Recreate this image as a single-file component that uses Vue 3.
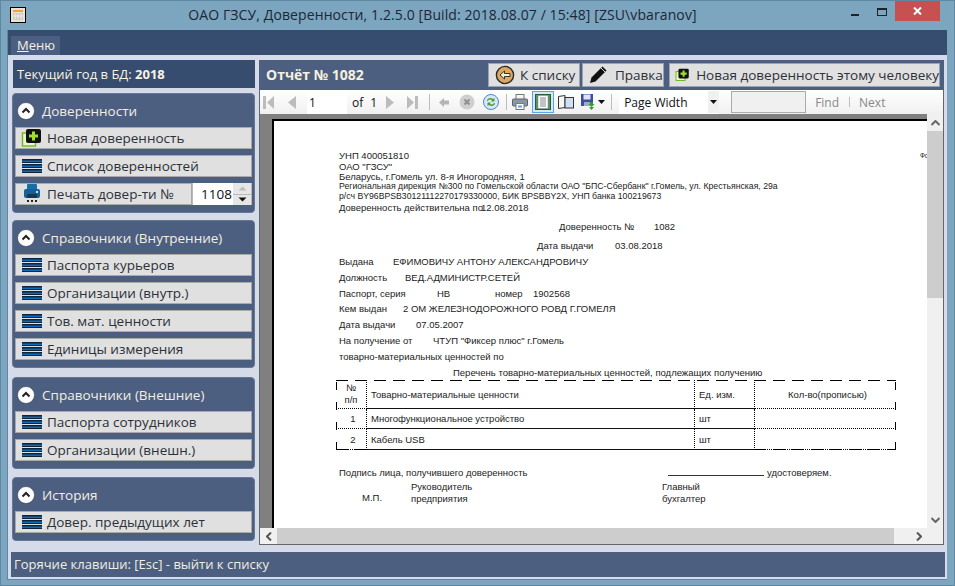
<template>
  <div class="window">
    <!-- title bar -->
    <div class="titlebar">
      <svg class="app_icon" width="17" height="17" viewBox="0 0 17 17">
        <rect x="0.5" y="0.5" width="15" height="15" fill="#e8e4da" stroke="#000" />
        <rect x="3" y="3" width="10" height="2" fill="#f0a040" />
        <rect x="3" y="6" width="10" height="7" fill="#cfc8b8" />
        <path d="M5 6.5v6M8 6.5v6M11 6.5v6M3 9h10" stroke="#eee" />
      </svg>
      <div class="title">ОАО ГЗСУ, Доверенности, 1.2.5.0 [Build: 2018.08.07 / 15:48] [ZSU\vbaranov]</div>
      <div class="min_btn"></div>
      <div class="max_btn"></div>
      <div class="close_btn">
        <svg width="9" height="8" viewBox="0 0 9 8"><path d="M1 0.5l7 7M8 0.5l-7 7" stroke="#fff" stroke-width="2" /></svg>
      </div>
    </div>

    <div class="client">
      <div class="menubar"><span class="menu_item"><u>М</u>еню</span></div>

      <div class="body">
        <!-- left column -->
        <div class="left">
          <div class="year_bar">Текущий год в БД: <b>2018</b></div>

          <div v-for="g in groups" :key="g.title" class="group" :class="g.cls">
            <div class="group_head">
              <svg width="18" height="18" viewBox="0 0 18 18">
                <circle cx="9" cy="9" r="8.5" fill="#fff" stroke="#2a3a55" stroke-width="0.6" />
                <path d="M5.5 10.5L9 7l3.5 3.5" fill="none" stroke="#222" stroke-width="2" />
              </svg>
              <span>{{ g.title }}</span>
            </div>
            <div class="group_items">
              <template v-for="b in g.items" :key="b.text">
                <div v-if="b.spin" class="side_btn spin_row">
                  <div class="spin_main">
                    <svg class="ic" width="22" height="20" viewBox="0 0 22 20">
                      <rect x="6" y="0" width="10" height="6" rx="1" fill="#1a6ea8" />
                      <rect x="3" y="5" width="16" height="9" rx="2" fill="#12619a" />
                      <rect x="6" y="10" width="10" height="4" fill="#0c3a5c" />
                      <rect x="15" y="7" width="2" height="2" fill="#cfe4f4" />
                      <path d="M6 17h2M10 17h2M14 17h2" stroke="#222" stroke-width="2" />
                    </svg>
                    <span>{{ b.text }}</span>
                  </div>
                  <div class="spin_val">1108</div>
                  <div class="spin_btns">
                    <div class="spin_up"><svg width="9" height="5" viewBox="0 0 9 5"><path d="M0.5 4.5L4.5 0.5l4 4z" fill="#bbb" /></svg></div>
                    <div class="spin_down"><svg width="9" height="5" viewBox="0 0 9 5"><path d="M0.5 0.5L4.5 4.5l4-4z" fill="#111" /></svg></div>
                  </div>
                </div>
                <div v-else class="side_btn">
                  <svg v-if="b.plus" class="ic" width="22" height="20" viewBox="0 0 22 20">
                    <rect x="1.5" y="5" width="13" height="13" fill="#eaf5d0" stroke="#6db81e" stroke-width="1.4" />
                    <rect x="5" y="1" width="15" height="14" rx="2" fill="#111" />
                    <path d="M12.5 3.5v9M8 8h9" stroke="#9ee02a" stroke-width="3" />
                  </svg>
                  <svg v-else class="ic" width="22" height="16" viewBox="0 0 22 16">
                    <g v-for="y in [1, 6, 11]" :key="y">
                      <rect x="1" :y="y" width="20" height="4" fill="#10233a" />
                      <rect x="1" :y="y + 1.5" width="20" height="1.5" fill="#0f6cb8" />
                    </g>
                  </svg>
                  <span>{{ b.text }}</span>
                </div>
              </template>
            </div>
          </div>
        </div>

        <!-- right column -->
        <div class="right">
          <div class="report_head">
            <div class="report_title">Отчёт № 1082</div>
            <div class="head_btn back_btn">
              <svg width="20" height="20" viewBox="0 0 20 20">
                <circle cx="10" cy="10" r="8.6" fill="#dba85f" stroke="#2b2b2b" stroke-width="1.4" />
                <path d="M5 10l4.5-4v2.5H15v3H9.500V14z" fill="#f4f0e0" stroke="#222" stroke-width="0.9" />
              </svg>
              <span>К списку</span>
            </div>
            <div class="head_btn edit_btn">
              <svg width="22" height="22" viewBox="0 0 22 22">
                <path d="M3 19l1.500-5.500L15.500 2.500l4 4L8.500 17.500z" fill="#111" />
                <path d="M14 4l4 4" stroke="#e0e0e0" stroke-width="1" />
              </svg>
              <span>Правка</span>
            </div>
            <div class="head_btn new_btn">
              <svg width="22" height="20" viewBox="0 0 22 20">
                <rect x="1.5" y="5" width="13" height="13" fill="#eaf5d0" stroke="#6db81e" stroke-width="1.4" />
                <rect x="5" y="1" width="15" height="14" rx="2" fill="#111" />
                <path d="M12.5 3.500v9M8 8h9" stroke="#9ee02a" stroke-width="3" />
              </svg>
              <span>Новая доверенность этому человеку</span>
            </div>
          </div>

          <div class="viewer">
            <div class="toolbar">
              <svg class="t_first" width="11" height="13" viewBox="0 0 11 13"><path d="M0 0h3v13H0zM11 0v13L4 6.500z" fill="#bcbcbc" /></svg>
              <svg class="t_prev" width="8" height="13" viewBox="0 0 8 13"><path d="M8 0v13L0 6.500z" fill="#bcbcbc" /></svg>
              <div class="page_input">1</div>
              <span class="t_of">of</span>
              <span class="t_total">1</span>
              <svg class="t_next" width="8" height="13" viewBox="0 0 8 13"><path d="M0 0v13l8-6.500z" fill="#bcbcbc" /></svg>
              <svg class="t_last" width="11" height="13" viewBox="0 0 11 13"><path d="M8 0h3v13H8zM0 0v13l7-6.500z" fill="#bcbcbc" /></svg>
              <div class="t_sep t_sep1"></div>
              <svg class="t_back" width="10" height="9" viewBox="0 0 10 9"><path d="M0 4.500L5 0v2.500h5v4H5V9z" fill="#b4b4b4" /></svg>
              <svg class="t_stop" width="16" height="16" viewBox="0 0 16 16">
                <circle cx="8" cy="8" r="7.500" fill="#cfcfcf" />
                <path d="M5.500 5.500l5 5M10.500 5.500l-5 5" stroke="#8f8f8f" stroke-width="2" />
              </svg>
              <svg class="t_refresh" width="16" height="16" viewBox="0 0 16 16">
                <circle cx="8" cy="8" r="7.500" fill="#d8e8f8" stroke="#4a86c8" />
                <path d="M4 7c0-3 4-4 6-2l1.500-1v3.500H8l1-1C8 5 5.500 5.500 5 7z" fill="#4aa02c" />
                <path d="M12 9c0 3-4 4-6 2l-1.500 1V8.500H8l-1 1c1 1.500 3.500 1 4-.5z" fill="#4aa02c" />
              </svg>
              <div class="t_sep t_sep2"></div>
              <svg class="t_print" width="16" height="16" viewBox="0 0 16 16">
                <rect x="4" y="0.500" width="8" height="5" fill="#f4f4f4" stroke="#777" />
                <rect x="0.500" y="5" width="15" height="7" rx="1" fill="#8b97a5" stroke="#5a6470" />
                <rect x="4" y="9.500" width="8" height="6" fill="#fff" stroke="#777" />
                <rect x="6" y="11.500" width="4" height="2" fill="#5aa0dc" />
              </svg>
              <div class="t_active">
                <svg width="16" height="16" viewBox="0 0 16 16">
                  <rect x="0.500" y="0.500" width="15" height="15" fill="#5f9168" stroke="#2c5a38" />
                  <rect x="3" y="1.500" width="10" height="13" fill="#fff" stroke="#6f8f78" stroke-width="0.5" />
                  <path d="M5 4h6M5 6h6M5 8h6M5 10h6M5 12h6" stroke="#667" stroke-width="0.8" />
                </svg>
              </div>
              <svg class="t_book" width="16" height="14" viewBox="0 0 16 14">
                <path d="M0.500 1.500L7 0.500v12l-6.500 1z" fill="#f6f6f6" stroke="#333" />
                <rect x="7" y="2.500" width="8.500" height="10.500" fill="#cfe0f2" stroke="#333" />
              </svg>
              <svg class="t_save" width="14" height="16" viewBox="0 0 14 16">
                <rect x="0" y="0" width="12" height="12" fill="#3c4ca8" />
                <rect x="2.500" y="0.500" width="7" height="5" fill="#dfe3f4" />
                <rect x="3" y="8" width="6" height="4" fill="#a0a8d0" />
                <path d="M7.500 10l3 3 3-3-1.500 0-.500-2h-2l-.500 2zM8 13h5l-2.500 3z" fill="#2fa030" />
              </svg>
              <svg class="t_caret" width="7" height="4" viewBox="0 0 7 4"><path d="M0 0h7L3.500 4z" fill="#111" /></svg>
              <div class="t_sep t_sep3"></div>
              <div class="zoom_select">
                <span>Page Width</span>
                <div class="zoom_arrow"><svg width="7" height="4" viewBox="0 0 7 4"><path d="M0 0h7L3.500 4z" fill="#111" /></svg></div>
              </div>
              <div class="find_box"></div>
              <span class="t_find">Find</span>
              <div class="t_sep t_sep4"></div>
              <span class="t_nextword">Next</span>
            </div>

            <div class="report_area">
              <div class="report_scroll">
                <div class="page">
                  <div
                    v-for="(l, i) in lines"
                    :key="i"
                    class="ln"
                    :style="{ height: l.h + 'px', paddingLeft: l.x + 'px' }"
                  >
                    <span
                      v-for="(p, j) in l.parts"
                      :key="j"
                      :style="p.w ? { width: p.w + 'px' } : {}"
                      :class="p.cls"
                    >{{ p.t }}</span>
                  </div>

                  <div class="doc_table">
                    <div class="cell c1 head two"><span>№</span><span>п/п</span></div>
                    <div class="cell c2 head">Товарно-материальные ценности</div>
                    <div class="cell c3 head">Ед. изм.</div>
                    <div class="cell c4 head center">Кол-во(прописью)</div>

                    <template v-for="r in rows" :key="r.n">
                      <div class="cell c1 row center">{{ r.n }}</div>
                      <div class="cell c2 row">{{ r.name }}</div>
                      <div class="cell c3 row">шт</div>
                      <div class="cell c4 row"></div>
                    </template>
                  </div>

                  <div class="sign_row">
                    <span class="sign_label">Подпись лица, получившего доверенность</span>
                    <span class="sign_line"></span>
                    <span>удостоверяем.</span>
                  </div>
                  <div class="boss_row">
                    <span class="mp">М.П.</span>
                    <span class="boss">Руководитель<br />предприятия</span>
                    <span>Главный<br />бухгалтер</span>
                  </div>
                </div>
                <div class="v_scroll">
                  <div class="arrow_box"><svg width="9" height="6" viewBox="0 0 9 6"><path d="M0.500 5L4.500 1l4 4" fill="none" stroke="#666" stroke-width="2" /></svg></div>
                  <div class="v_thumb"></div>
                  <div class="v_rest"></div>
                  <div class="arrow_box"><svg width="9" height="6" viewBox="0 0 9 6"><path d="M0.500 1L4.500 5l4-4" fill="none" stroke="#666" stroke-width="2" /></svg></div>
                </div>
              </div>
              <div class="h_scroll">
                <div class="h_arrow"><svg width="6" height="9" viewBox="0 0 6 9"><path d="M5 0.500L1 4.500l4 4" fill="none" stroke="#555" stroke-width="2" /></svg></div>
                <div class="h_thumb"></div>
                <div class="h_rest"><svg width="6" height="9" viewBox="0 0 6 9"><path d="M1 0.500L5 4.500l-4 4" fill="none" stroke="#555" stroke-width="2" /></svg></div>
              </div>
            </div>
          </div>
        </div>
      </div>

      <div class="statusbar">Горячие клавиши: [Esc] - выйти к списку</div>
    </div>
  </div>
</template>

<script setup>
const groups = [
  {
    title: 'Доверенности',
    cls: 'g1',
    items: [
      { text: 'Новая доверенность', plus: true },
      { text: 'Список доверенностей' },
      { text: 'Печать довер-ти №', spin: true },
    ],
  },
  {
    title: 'Справочники (Внутренние)',
    cls: 'g2',
    items: [
      { text: 'Паспорта курьеров' },
      { text: 'Организации (внутр.)' },
      { text: 'Тов. мат. ценности' },
      { text: 'Единицы измерения' },
    ],
  },
  {
    title: 'Справочники (Внешние)',
    cls: 'g3',
    items: [{ text: 'Паспорта сотрудников' }, { text: 'Организации (внешн.)' }],
  },
  {
    title: 'История',
    cls: 'g4',
    items: [{ text: 'Довер. предыдущих лет' }],
  },
]

// h = line height in the printed form, x = left indent inside the page
const lines = [
  { h: 40, x: 65, parts: [{ t: 'УНП 400051810', cls: 'bottom' }, { t: 'Форма №М-2', cls: 'form_no' }] },
  { h: 10, x: 65, parts: [{ t: 'ОАО "ГЗСУ"' }] },
  { h: 10, x: 65, parts: [{ t: 'Беларусь, г.Гомель ул. 8-я Иногородняя, 1' }] },
  { h: 10, x: 65, parts: [{ t: 'Региональная дирекция №300 по Гомельской области ОАО "БПС-Сбербанк" г.Гомель, ул. Крестьянская, 29а', cls: 'small' }] },
  { h: 10, x: 65, parts: [{ t: 'р/сч BY96BPSB30121112270179330000, БИК BPSBBY2X, УНП банка 100219673', cls: 'small' }] },
  { h: 13, x: 65, parts: [{ t: 'Доверенность действительна по', w: 142 }, { t: '12.08.2018' }] },
  { h: 24, x: 285, parts: [{ t: 'Доверенность №', w: 95 }, { t: '1082' }], },
  { h: 15, x: 263, parts: [{ t: 'Дата выдачи', w: 78 }, { t: '03.08.2018' }] },
  { h: 16, x: 65, parts: [{ t: 'Выдана', w: 54 }, { t: 'ЕФИМОВИЧУ АНТОНУ АЛЕКСАНДРОВИЧУ' }] },
  { h: 16, x: 65, parts: [{ t: 'Должность', w: 66 }, { t: 'ВЕД.АДМИНИСТР.СЕТЕЙ' }] },
  { h: 16, x: 65, parts: [{ t: 'Паспорт, серия', w: 98 }, { t: 'НВ', w: 58 }, { t: 'номер', w: 38 }, { t: '1902568' }] },
  { h: 15, x: 65, parts: [{ t: 'Кем выдан', w: 64 }, { t: '2 ОМ ЖЕЛЕЗНОДОРОЖНОГО РОВД Г.ГОМЕЛЯ' }] },
  { h: 16, x: 65, parts: [{ t: 'Дата выдачи', w: 77 }, { t: '07.05.2007' }] },
  { h: 16, x: 65, parts: [{ t: 'На получение от', w: 94 }, { t: 'ЧТУП "Фиксер плюс" г.Гомель' }] },
  { h: 17, x: 65, parts: [{ t: 'товарно-материальных ценностей по' }] },
  { h: 14, x: 179, parts: [{ t: 'Перечень товарно-материальных ценностей, подлежащих получению' }] },
]

const rows = [
  { n: 1, name: 'Многофункциональное устройство' },
  { n: 2, name: 'Кабель USB' },
]
</script>

<style scoped>
.window {
  width: 955px;
  height: 586px;
  box-sizing: border-box;
  background: #7ca5c0;
  border: 1px solid #5f87a3;
  display: flex;
  flex-direction: column;
  font-family: "Open Sans", "Noto Sans", sans-serif;
  overflow: hidden;
}

/* title bar */
.titlebar {
  height: 29px;
  display: flex;
  align-items: flex-start;
  flex-shrink: 0;
}

.app_icon {
  margin: 6px 0 0 9px;
  flex-shrink: 0;
}

.title {
  width: 824px;
  text-align: center;
  font-size: 14px;
  line-height: 28px;
  color: #1c2733;
  white-space: nowrap;
  padding-left: 7px;
  box-sizing: border-box;
  letter-spacing: 0.1px;
}

.min_btn {
  width: 8px;
  height: 2px;
  background: #222;
  margin: 13px 0 0 0;
}

.max_btn {
  width: 8px;
  height: 5px;
  border: 1px solid #222;
  border-top-width: 2px;
  margin: 7px 0 0 18px;
}

.close_btn {
  width: 45px;
  height: 20px;
  background: #c75050;
  margin-left: 8px;
  display: flex;
  align-items: center;
  justify-content: center;
}

/* client area */
.client {
  margin: 0 7px 0 6px;
  height: 549px;
  background: #d5dbe9;
  border-left: 1px solid #5f87a3;
  border-bottom: 1px solid #5f87a3;
  display: flex;
  flex-direction: column;
}

.menubar {
  height: 25px;
  background: #364d70;
  padding: 3px 0 0 3px;
  box-sizing: border-box;
  flex-shrink: 0;
}

.menu_item {
  display: inline-block;
  height: 19px;
  line-height: 19px;
  padding: 0 5px 0 6px;
  background: #4d5f80;
  color: #f4f1e6;
  font-size: 13px;
}

.body {
  height: 491px;
  display: flex;
  padding-top: 5px;
  box-sizing: border-box;
}

/* left column */
.left {
  width: 243px;
  margin-left: 4px;
  display: flex;
  flex-direction: column;
  flex-shrink: 0;
}

.year_bar {
  height: 28px;
  line-height: 28px;
  margin-left: 1px;
  background: #364d70;
  color: #f8f3e4;
  font-size: 13px;
  padding-left: 4px;
  margin-bottom: 5px;
}

.group {
  background: #4d5f80;
  border: 1px solid #66779a;
  border-radius: 4px;
  box-sizing: border-box;
  padding: 0 2px;
}

.g1 { height: 120px; margin-bottom: 7px; }
.g2 { height: 148px; margin-bottom: 9px; }
.g3 { height: 92px; margin-bottom: 8px; }
.g4 { height: 64px; }

.group_head {
  height: 33px;
  display: flex;
  align-items: center;
  gap: 7px;
  padding-left: 2px;
  color: #f1eee2;
  font-size: 13.500px;
}

.group_items {
  display: flex;
  flex-direction: column;
  gap: 6px;
}

.side_btn {
  height: 22px;
  box-sizing: border-box;
  background: #e0e0e0;
  border: 1px solid #a9a9a9;
  display: flex;
  align-items: center;
  color: #2c3038;
  font-size: 13.500px;
  white-space: nowrap;
}

.ic {
  margin: 0 4px 0 5px;
  flex-shrink: 0;
}

.spin_row {
  border: none;
  background: #b9b9b9;
}

.spin_main {
  width: 177px;
  height: 22px;
  box-sizing: border-box;
  background: #e0e0e0;
  border: 1px solid #a9a9a9;
  display: flex;
  align-items: center;
  flex-shrink: 0;
}

.spin_val {
  width: 40px;
  height: 22px;
  background: #fff;
  color: #111;
  font-size: 13.500px;
  line-height: 22px;
  text-align: right;
  padding-right: 1px;
  box-sizing: border-box;
  margin-left: 1px;
}

.spin_btns {
  width: 18px;
  height: 22px;
  display: flex;
  flex-direction: column;
  gap: 1px;
}

.spin_up,
.spin_down {
  flex: 1;
  background: #e6e6e6;
  display: flex;
  align-items: center;
  justify-content: center;
}

/* right column */
.right {
  width: 685px;
  margin-left: 4px;
  display: flex;
  flex-direction: column;
  flex-shrink: 0;
}

.report_head {
  height: 30px;
  background: #4d5f80;
  display: flex;
  align-items: flex-start;
  padding-top: 3px;
  box-sizing: border-box;
  flex-shrink: 0;
}

.report_title {
  width: 229px;
  padding-left: 7px;
  box-sizing: border-box;
  font-size: 14px;
  font-weight: 700;
  line-height: 24px;
  color: #f6f1df;
  white-space: nowrap;
}

.head_btn {
  height: 24px;
  box-sizing: border-box;
  background: #e0e0e0;
  border: 1px solid #9aa3b3;
  display: flex;
  align-items: center;
  color: #2c3038;
  font-size: 13.500px;
  white-space: nowrap;
}

.back_btn { width: 92px; padding-left: 6px; gap: 5px; }
.edit_btn { width: 82px; margin-left: 2px; padding-left: 4px; gap: 6px; }
.new_btn { width: 271px; margin-left: 5px; padding-left: 5px; gap: 6px; }

.viewer {
  height: 455px;
  box-sizing: border-box;
  border: 1px solid #666;
  border-top: none;
  display: flex;
  flex-direction: column;
}

.toolbar {
  height: 24px;
  background: linear-gradient(#ffffff, #f0f0f0);
  display: flex;
  align-items: center;
  font-family: "Open Sans", sans-serif;
  font-size: 12px;
  color: #111;
  flex-shrink: 0;
}

.t_first { margin-left: 3px; }
.t_prev { margin-left: 14px; }
.page_input {
  width: 40px;
  height: 23px;
  line-height: 23px;
  background: #fff;
  margin-left: 11px;
  padding-left: 2px;
  box-sizing: border-box;
}
.t_of { margin-left: 5px; }
.t_total { margin-left: 7px; }
.t_next { margin-left: 9px; }
.t_last { margin-left: 13px; }
.t_sep {
  width: 1px;
  height: 16px;
  background: #bcbcbc;
}
.t_sep1 { margin-left: 11px; }
.t_back { margin-left: 9px; }
.t_stop { margin-left: 10px; }
.t_refresh { margin-left: 8px; }
.t_sep2 { margin-left: 7px; }
.t_print { margin-left: 5px; }
.t_active {
  width: 22px;
  height: 22px;
  box-sizing: border-box;
  margin-left: 4px;
  background: #d7e9f8;
  border: 1px solid #5aa5ea;
  display: flex;
  align-items: center;
  justify-content: center;
}
.t_book { margin-left: 4px; }
.t_save { margin-left: 7px; }
.t_caret { margin-left: 3px; }
.t_sep3 { margin-left: 6px; }
.zoom_select {
  width: 100px;
  height: 23px;
  background: #fff;
  margin-left: 7px;
  display: flex;
  align-items: center;
  justify-content: space-between;
  box-sizing: border-box;
  padding-left: 5px;
}
.zoom_arrow {
  width: 11px;
  height: 22px;
  background: #f0f0f0;
  display: flex;
  align-items: center;
  justify-content: center;
}
.find_box {
  width: 75px;
  height: 22px;
  box-sizing: border-box;
  background: #f0f0f0;
  border: 1px solid #aaa;
  margin-left: 12px;
}
.t_find { margin-left: 9px; color: #888; }
.t_sep4 { margin-left: 10px; height: 10px; }
.t_nextword { margin-left: 9px; color: #888; }

.report_area {
  flex: 1;
  display: flex;
  flex-direction: column;
  min-height: 0;
}

.report_scroll {
  flex: 1;
  display: flex;
  min-height: 0;
}

.page {
  width: 655px;
  margin: 5px 0 0 12px;
  box-sizing: border-box;
  background: #fff;
  border-top: 2px solid #000;
  border-left: 2px solid #000;
  font-family: "Liberation Sans", Arial, sans-serif;
  font-size: 9.500px;
  color: #222;
  overflow: hidden;
  flex-shrink: 0;
  box-shadow: 0 -5px 0 0 #808080;
}

.ln {
  display: flex;
  align-items: center;
  box-sizing: border-box;
  white-space: nowrap;
}

.ln span {
  flex-shrink: 0;
}

.bottom {
  align-self: flex-end;
  line-height: 11px;
}

.form_no {
  font-size: 6.500px;
  margin-left: 511px;
  align-self: flex-start;
  margin-top: 31px;
}

.small {
  font-size: 8.700px;
}

.doc_table {
  width: 560px;
  height: 70px;
  margin: 1px 0 0 62px;
  display: grid;
  grid-template-columns: 31px 328px 60px 141px;
  grid-template-rows: 29px 20px 21px;
  background-image:
    repeating-linear-gradient(90deg, #000 0 12px, transparent 12px 19px),
    repeating-linear-gradient(90deg, #000 0 12px, transparent 12px 19px),
    repeating-linear-gradient(0deg, #000 0 8px, transparent 8px 20px),
    repeating-linear-gradient(0deg, #000 0 8px, transparent 8px 20px);
  background-size: 100% 1px, 100% 1px, 1px 100%, 1px 100%;
  background-position: 0 0, 0 100%, 0 0, 100% 0;
  background-repeat: no-repeat;
}

.cell {
  box-sizing: border-box;
  display: flex;
  align-items: center;
  padding-left: 4px;
}

.two {
  flex-direction: column;
  justify-content: center;
  padding-left: 0;
  line-height: 12px;
}

.center {
  justify-content: center;
}

.c1,
.c2,
.c3 {
  border-right: 1px dotted #000;
}

.c1.head,
.c4.head,
.c1.row,
.c4.row {
  border-bottom: 1px dotted #000;
}

.c2.head,
.c3.head,
.c2.row,
.c3.row {
  border-bottom: 1px solid #111;
}

.sign_row {
  display: flex;
  align-items: center;
  margin: 16px 0 0 65px;
  height: 12px;
  white-space: nowrap;
}

.sign_label {
  width: 329px;
}

.sign_line {
  width: 96px;
  height: 1px;
  background: #333;
  margin: 6px 3px 0 0;
}

.boss_row {
  display: flex;
  margin: 3px 0 0 88px;
  line-height: 11.500px;
  white-space: nowrap;
}

.mp {
  width: 49px;
  padding-top: 11px;
}

.boss {
  width: 251px;
}

.v_scroll {
  width: 16px;
  margin-left: 0;
  background: #f0f0f0;
  display: flex;
  flex-direction: column;
  flex-shrink: 0;
}

.arrow_box {
  height: 17px;
  display: flex;
  align-items: center;
  justify-content: center;
  flex-shrink: 0;
}

.v_thumb {
  height: 167px;
  background: #cdcdcd;
}

.v_rest {
  flex: 1;
}

.h_scroll {
  height: 16px;
  display: flex;
  background: #f0f0f0;
  flex-shrink: 0;
}

.h_arrow {
  width: 17px;
  display: flex;
  align-items: center;
  justify-content: center;
}

.h_thumb {
  width: 617px;
  background: #cdcdcd;
}

.h_rest {
  flex: 1;
  display: flex;
  align-items: center;
  padding-left: 22px;
}

.statusbar {
  height: 25px;
  margin: 6px 2px 0 3px;
  background: #4d5f80;
  color: #f1eee2;
  font-size: 13px;
  line-height: 24px;
  padding-left: 3px;
  flex-shrink: 0;
}

.report_area {
  background: #808080;
}
</style>
